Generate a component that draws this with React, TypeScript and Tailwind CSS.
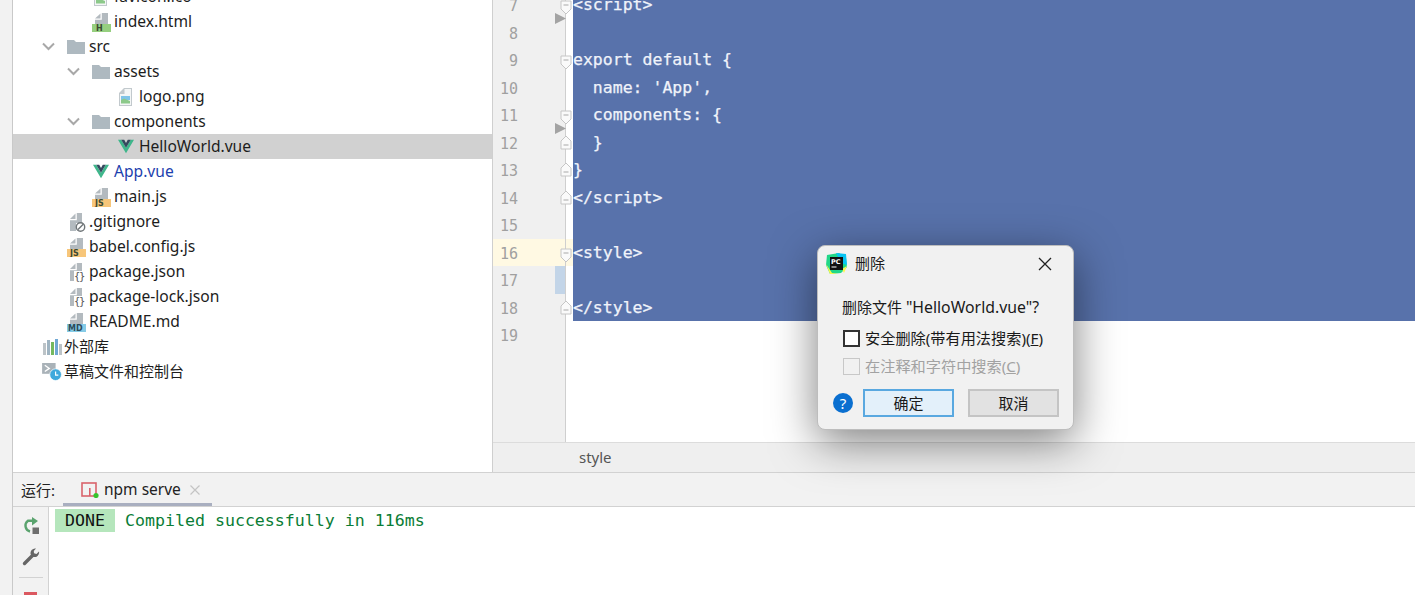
import React from "react";

const UI = '"Noto Sans","Noto Sans CJK SC",sans-serif';

function Page({ cls = "#b3babf" }: { cls?: string }) {
  return (
    <>
      <path d="M3 6.5 L8.5 1.5 V6.5 Z" fill={cls} />
      <path d="M9.8 1 H16 V13 H3 V7.8 H9.8 Z" fill={cls} />
    </>
  );
}

function Badge({ color, label, x = 3, dark = "#3c4a33" }: { color: string; label: string; x?: number; dark?: string }) {
  return (
    <svg width="20" height="20" viewBox="0 0 20 20" className="shrink-0">
      <Page />
      <rect x="0" y="12" width="19" height="8" fill={color} />
      <text x={x} y="19" fontSize="8" fontWeight="700" fontFamily='"DejaVu Sans",sans-serif' fill={dark}>{label}</text>
    </svg>
  );
}

function Folder() {
  return (
    <svg width="20" height="20" viewBox="0 0 20 20" className="shrink-0">
      <path d="M0 3 H7 L9 5 H18 V17 H0 Z" fill="#aeb9c0" />
    </svg>
  );
}

function ImageFile() {
  return (
    <svg width="20" height="20" viewBox="2 0 20 20" className="shrink-0">
      <path d="M4 6 L9 1 H17 V19 H4 Z" fill="#c2c9cd" />
      <path d="M5 7 L9.5 7 V2 H16 V18 H5 Z" fill="#f4f6f6" />
      <rect x="6" y="9" width="9" height="4" fill="#7fc4e8" />
      <path d="M6 16.5 V13 L9 11.5 L15 14 V16.5 Z" fill="#8cc98a" />
    </svg>
  );
}

function Vue() {
  return (
    <svg width="16" height="15" viewBox="0 0 18 15" className="mr-[2px] shrink-0">
      <path d="M0 0 H3.6 L9 9 L14.4 0 H18 L9 15 Z" fill="#3fb68b" />
      <path d="M3.6 0 H7 L9 3.5 L11 0 H14.4 L9 9 Z" fill="#35495e" />
    </svg>
  );
}

function Ignore() {
  return (
    <svg width="20" height="20" viewBox="0 0 20 20" className="shrink-0">
      <path d="M3 7 L8.5 1.5 V7 Z" fill="#b3babf" />
      <path d="M9.8 1 H15 V11 H3 V8.3 H9.8 Z M3 11 H9 V19 H3 Z" fill="#b3babf" />
      <circle cx="13.5" cy="15" r="4.2" fill="#fff" stroke="#6f7578" strokeWidth="1.4" />
      <path d="M10.8 17.7 L16.2 12.3" stroke="#6f7578" strokeWidth="1.4" />
    </svg>
  );
}

function Json() {
  return (
    <svg width="20" height="20" viewBox="0 0 20 20" className="shrink-0">
      <path d="M3 7 L8.5 1.5 V7 Z" fill="#b3babf" />
      <path d="M9.8 1 H15 V9 H3 V8.3 H9.8 Z M3 9 H7 V19 H3 Z" fill="#b3babf" />
      <text x="7" y="18" fontSize="10.5" fontFamily='"DejaVu Sans Mono",monospace' fill="#555" letterSpacing="-1.2">{"{}"}</text>
    </svg>
  );
}

function Library() {
  return (
    <svg width="19" height="16" viewBox="0 0 19 16" className="shrink-0">
      <rect x="0" y="4" width="3" height="12" fill="#bcc3c7" />
      <rect x="4" y="1" width="3" height="15" fill="#9fb4c2" />
      <rect x="8" y="3" width="3" height="13" fill="#74b85f" />
      <rect x="12" y="0" width="3" height="16" fill="#6fa8d4" />
      <rect x="16" y="5" width="3" height="11" fill="#bcc3c7" />
    </svg>
  );
}

function Scratch() {
  return (
    <svg width="20" height="18" viewBox="0 0 22 20" className="shrink-0">
      <rect x="0" y="0" width="15" height="12" fill="#a9b2b8" />
      <path d="M3 2.5 L8 6 L3 9.5" fill="none" stroke="#fff" strokeWidth="1.5" />
      <circle cx="15" cy="13" r="6.5" fill="#3fa9dc" stroke="#fff" strokeWidth="0.8" />
      <path d="M15 9.5 V13.5 H18" fill="none" stroke="#fff" strokeWidth="1.3" />
    </svg>
  );
}

function Chevron() {
  return (
    <svg width="13" height="9" viewBox="0 0 13 9" className="shrink-0">
      <path d="M1 1.5 L6.5 7 L12 1.5" fill="none" stroke="#a8a8a8" strokeWidth="2" />
    </svg>
  );
}

function Row({
  indent,
  chevron,
  icon,
  label,
  selected,
  color,
  size,
}: {
  indent: string;
  chevron?: boolean;
  icon: React.ReactNode;
  label: string;
  selected?: boolean;
  color?: string;
  size?: string;
}) {
  return (
    <div className={`flex h-[25px] items-center whitespace-nowrap ${indent} ${selected ? "bg-[#d1d1d1]" : ""}`}>
      <span className="flex w-[25px] shrink-0 items-center pl-[3px]">{chevron ? <Chevron /> : null}</span>
      <span className="flex w-[25px] shrink-0 items-center justify-center pl-[1px]">{icon}</span>
      <span className={`${size ?? "text-[15.6px]"} ${color ?? "text-[#1d1d1d]"}`}>{label}</span>
    </div>
  );
}

function Tree() {
  return (
    <div className="-mt-[16px] w-[479px] shrink-0">
      <Row indent="pl-[51px]" icon={<ImageFile />} label="favicon.ico" />
      <Row indent="pl-[51px]" icon={<Badge color="#96cf7f" label="H" x={4} />} label="index.html" />
      <Row indent="pl-[26px]" chevron icon={<Folder />} label="src" />
      <Row indent="pl-[51px]" chevron icon={<Folder />} label="assets" />
      <Row indent="pl-[76px]" icon={<ImageFile />} label="logo.png" />
      <Row indent="pl-[51px]" chevron icon={<Folder />} label="components" />
      <Row indent="pl-[76px]" icon={<Vue />} label="HelloWorld.vue" selected />
      <Row indent="pl-[51px]" icon={<Vue />} label="App.vue" color="text-[#1c3fae]" />
      <Row indent="pl-[51px]" icon={<Badge color="#f7c67a" label="JS" />} label="main.js" />
      <Row indent="pl-[26px]" icon={<Ignore />} label=".gitignore" />
      <Row indent="pl-[26px]" icon={<Badge color="#f7c67a" label="JS" />} label="babel.config.js" />
      <Row indent="pl-[26px]" icon={<Json />} label="package.json" />
      <Row indent="pl-[26px]" icon={<Json />} label="package-lock.json" />
      <Row indent="pl-[26px]" icon={<Badge color="#86cbe6" label="MD" x={1} dark="#2f4a58" />} label="README.md" />
      <Row indent="pl-[1px]" icon={<Library />} label="外部库" size="text-[15px]" />
      <Row indent="pl-[1px]" icon={<Scratch />} label="草稿文件和控制台" size="text-[15px]" />
    </div>
  );
}

function FoldOpen() {
  return (
    <svg width="12" height="15" viewBox="0 0 12 15" className="absolute left-[67px] top-[9px]">
      <path d="M1 1 H11 V9 L6 14 L1 9 Z" fill="#fafafa" stroke="#c6c6c6" />
      <path d="M3.5 5 H8.5" stroke="#a8a8a8" />
    </svg>
  );
}

function FoldClose() {
  return (
    <svg width="12" height="15" viewBox="0 0 12 15" className="absolute left-[67px] top-[6px]">
      <path d="M1 14 H11 V6 L6 1 L1 6 Z" fill="#fafafa" stroke="#c6c6c6" />
      <path d="M3.5 10 H8.5" stroke="#a8a8a8" />
    </svg>
  );
}

function FoldArrow() {
  return (
    <svg width="11" height="11" viewBox="0 0 11 11" className="absolute left-[62px] top-[22px] z-10">
      <path d="M0 0 L11 5.5 L0 11 Z" fill="#a3a3a3" />
    </svg>
  );
}

const lines: { n: number; code: string; fold?: "open" | "close"; arrow?: boolean }[] = [
  { n: 7, code: "<script>", fold: "open", arrow: true },
  { n: 8, code: "" },
  { n: 9, code: "export default {", fold: "open" },
  { n: 10, code: "  name: 'App'," },
  { n: 11, code: "  components: {", fold: "open", arrow: true },
  { n: 12, code: "  }", fold: "close" },
  { n: 13, code: "}", fold: "close" },
  { n: 14, code: "</script>", fold: "close" },
  { n: 15, code: "" },
  { n: 16, code: "<style>", fold: "open" },
  { n: 17, code: "" },
  { n: 18, code: "</style>", fold: "close" },
];

function Editor() {
  return (
    <div className="flex min-w-0 flex-1 flex-col overflow-hidden">
      <div className="flex min-h-0 flex-1 flex-col overflow-hidden">
        <div className="-mt-[9px] flex flex-1 flex-col">
          {lines.map((l) => (
            <div key={l.n} className="relative flex h-[27.5px] shrink-0">
              <div
                className={`w-[73px] shrink-0 border-r border-r-[#cfcfcf] pl-[7px] font-['DejaVu_Sans_Mono',monospace] text-[15px] leading-[30px] text-[#a0a0a0] ${
                  l.n === 16 ? "bg-[#fff9e3]" : "bg-[#f0f0f0]"
                }`}
              >
                <span className="inline-block w-[18px] text-right">{l.n}</span>
              </div>
              {l.n === 17 ? <span className="absolute left-[62px] top-0 h-full w-[10px] bg-[#c3d5e8]" /> : null}
              <div className={`w-[7px] shrink-0 ${l.n === 16 ? "bg-[#fff9e3]" : "bg-white"}`} />
              <div className="flex-1 whitespace-pre bg-[#5872ab] font-['DejaVu_Sans_Mono',monospace] text-[16.5px] leading-[28px] text-[#f0f3fa] [-webkit-text-stroke:0.25px]">
                {l.code}
              </div>
              {l.fold === "open" ? <FoldOpen /> : null}
              {l.fold === "close" ? <FoldClose /> : null}
              {l.arrow ? <FoldArrow /> : null}
            </div>
          ))}
          <div className="flex min-h-0 flex-1">
            <div className="w-[73px] shrink-0 border-r border-r-[#cfcfcf] bg-[#f0f0f0] pl-[7px] font-['DejaVu_Sans_Mono',monospace] text-[15px] leading-[30px] text-[#a0a0a0]">
              <span className="inline-block w-[18px] text-right">19</span>
            </div>
            <div className="flex-1 bg-white" />
          </div>
        </div>
      </div>
      <div className="flex h-[30px] shrink-0 items-center border-t border-t-[#dcdcdc] bg-[#efefef] pl-[86px] text-[15px] text-[#555]">
        style
      </div>
    </div>
  );
}

function RunIcon() {
  return (
    <svg width="18" height="16" viewBox="0 0 18 16" className="shrink-0">
      <rect x="1" y="1" width="14" height="13" fill="none" stroke="#d9636b" strokeWidth="1.6" />
      <rect x="8" y="6" width="1.6" height="8" fill="#d9636b" />
      <circle cx="15" cy="13.5" r="2.6" fill="#35c42c" />
    </svg>
  );
}

function Rerun() {
  return (
    <svg width="18" height="18" viewBox="0 0 18 18" className="shrink-0">
      <path d="M8 14.5 A6 6 0 0 1 6 3.8 H11" fill="none" stroke="#5aa36e" strokeWidth="2.4" />
      <path d="M10 0 L16 4 L10 8.5 Z" fill="#5aa36e" />
      <rect x="10.5" y="10.5" width="6.5" height="6.5" fill="#6e6e6e" />
    </svg>
  );
}

function Wrench() {
  return (
    <svg width="18" height="18" viewBox="0 0 18 18" className="shrink-0">
      <path d="M11 7 L2.5 15.5" stroke="#666" strokeWidth="3.4" strokeLinecap="round" />
      <path d="M17 3.5 L14.5 6 L12 5.2 L11.8 3 L14 0.5 A4.6 4.6 0 0 0 8.8 6.6 L11 8.8 A4.6 4.6 0 0 0 17 3.5 Z" fill="#666" />
    </svg>
  );
}

function Bottom() {
  return (
    <div className="flex min-h-0 flex-1 flex-col border-t border-t-[#d2d2d2]">
      <div className="flex h-[34px] shrink-0 items-stretch border-b border-b-[#d2d2d2] bg-[#f2f2f2] pl-[8px]">
        <span className="flex w-[42px] items-center pt-[2px] text-[15px] text-[#222]">运行:</span>
        <div className="flex w-[149px] items-center gap-[5px] border-b-[3px] border-b-[#a9afc0] pl-[18px] pt-[4px]">
          <RunIcon />
          <span className="text-[15.5px] text-[#222]">npm serve</span>
          <svg width="12" height="12" viewBox="0 0 12 12" className="ml-[3px] shrink-0">
            <path d="M1.5 1.5 L10.5 10.5 M10.5 1.5 L1.5 10.5" stroke="#c4c4c4" strokeWidth="1.2" />
          </svg>
        </div>
      </div>
      <div className="flex min-h-0 flex-1 overflow-hidden">
        <div className="flex w-[36px] shrink-0 flex-col items-center border-r border-r-[#d2d2d2] bg-[#f2f2f2] pt-[10px]">
          <Rerun />
          <div className="mt-[13px] shrink-0"><Wrench /></div>
          <div className="mt-[11px] h-px w-[24px] shrink-0 bg-[#d2d2d2]" />
          <div className="mt-[14px] h-[12px] w-[13px] shrink-0 bg-[#db5860]" />
        </div>
        <div className="flex flex-1 items-start bg-white pl-[6px] pt-[2px] font-['DejaVu_Sans_Mono',monospace] text-[16.6px]">
          <span className="flex h-[23px] w-[60px] items-center justify-center bg-[#b5e6bc] pt-[2px] text-[#111]">DONE</span>
          <span className="ml-[10px] flex h-[23px] items-center pt-[2px] text-[#0a7d36]">Compiled successfully in 116ms</span>
        </div>
      </div>
    </div>
  );
}

function PcLogo() {
  return (
    <svg width="21" height="21" viewBox="0 0 21 21" className="shrink-0">
      <path d="M1 2 L13 0 L20 5 L21 14 L15 20 L4 21 L0 12 Z" fill="#21d789" />
      <path d="M10 0 L20 1 L21 12 L15 10 Z" fill="#07c3f2" />
      <path d="M0 11 L6 20 L12 21 L4 21 Z" fill="#fcf84a" />
      <path d="M16 16 L21 13 L18 20 Z" fill="#fcf84a" />
      <rect x="4" y="4" width="13" height="13" fill="#111" />
      <text x="5" y="11" fontSize="6.5" fontWeight="700" fontFamily='"DejaVu Sans",sans-serif' fill="#fff">PC</text>
      <rect x="5.5" y="13.5" width="5" height="1" fill="#fff" />
    </svg>
  );
}

function Dialog() {
  return (
    <div className="absolute left-[817px] top-[245px] flex h-[185px] w-[257px] flex-col rounded-lg border border-[#bdbdbd] bg-[#f1f1f1] text-[15px] text-[#1a1a1a] shadow-[0_12px_45px_rgba(0,0,0,0.5)]">
      <div className="flex h-[35px] shrink-0 items-center pl-[8px] pr-[21px]">
        <PcLogo />
        <span className="ml-[8px] flex-1">删除</span>
        <svg width="14" height="14" viewBox="0 0 14 14" className="shrink-0">
          <path d="M1 1 L13 13 M13 1 L1 13" stroke="#222" strokeWidth="1.3" />
        </svg>
      </div>
      <div className="mt-[14px] whitespace-nowrap pl-[24px] leading-[24px]">
        删除文件 <span className="text-[15.8px]">"HelloWorld.vue"?</span>
      </div>
      <div className="mt-[9px] flex items-center whitespace-nowrap pl-[25px] leading-[20px]">
        <span className="h-[17px] w-[17px] shrink-0 border-2 border-[#333] bg-white" />
        <span className="ml-[5px] text-[15.2px]">安全删除(带有用法搜索)(<u>F</u>)</span>
      </div>
      <div className="mt-[8px] flex items-center whitespace-nowrap pl-[25px] leading-[20px] text-[#a2a2a2]">
        <span className="h-[17px] w-[17px] shrink-0 border border-[#c8c8c8] bg-[#f1f1f1]" />
        <span className="ml-[5px] text-[15.2px]">在注释和字符中搜索(<u>C</u>)</span>
      </div>
      <div className="mt-[13px] flex items-center pl-[15px]">
        <span className="flex h-[20px] w-[20px] items-center justify-center rounded-full bg-[#0a6fd0] text-[15px] text-white">?</span>
        <span className="ml-[10px] flex h-[28px] w-[91px] items-center justify-center border-2 border-[#59a8e0] bg-[#e3f0fa]">确定</span>
        <span className="ml-[14px] flex h-[28px] w-[91px] items-center justify-center border-2 border-[#c4c4c4] bg-[#e2e2e2]">取消</span>
      </div>
    </div>
  );
}

export default function App() {
  return (
    <div className="relative flex h-[595px] w-[1415px] overflow-hidden bg-white" style={{ fontFamily: UI }}>
      <div className="w-[13px] shrink-0 border-r border-r-[#c9c9c9] bg-[#f2f2f2]" />
      <div className="flex min-w-0 flex-1 flex-col">
        <div className="flex h-[472px] shrink-0 overflow-hidden">
          <div className="flex w-[480px] shrink-0 flex-col overflow-hidden border-r border-r-[#cfcfcf] bg-white">
            <Tree />
          </div>
          <Editor />
        </div>
        <Bottom />
      </div>
      <Dialog />
    </div>
  );
}
